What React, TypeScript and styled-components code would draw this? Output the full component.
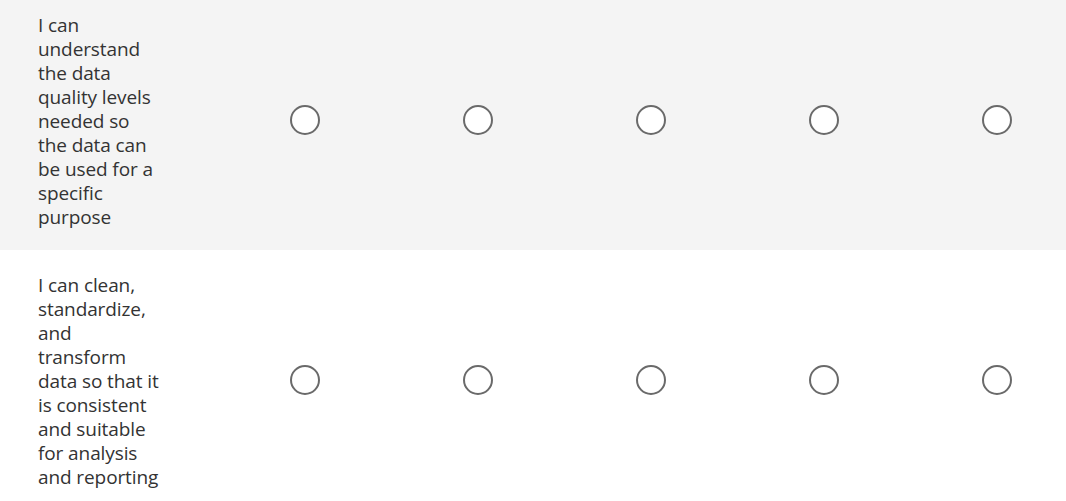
import React from "react";
import styled, { createGlobalStyle } from "styled-components";

const GlobalStyle = createGlobalStyle`
  html, body {
    margin: 0;
    padding: 0;
    overflow: hidden;
    background: #ffffff;
  }
  body {
    font-family: "Open Sans", "Noto Sans", sans-serif;
  }
`;

const Table = styled.div`
  display: flex;
  flex-direction: column;
  margin-top: -10px;
  width: 1083px;
`;

const Row = styled.div<{ $shaded?: boolean }>`
  display: grid;
  grid-template-columns: 218px repeat(5, 173px);
  align-items: center;
  height: 260px;
  background: ${(p) => (p.$shaded ? "#f4f4f4" : "#ffffff")};
`;

const Label = styled.div`
  padding: 1px 0 0 38px;
  font-size: 19px;
  line-height: 24px;
  letter-spacing: -0.1px;
  color: #333333;
`;

const Line = styled.span`
  display: block;
  white-space: nowrap;
`;

const Cell = styled.div`
  display: flex;
  justify-content: center;
  align-items: center;
`;

const Radio = styled.span`
  display: block;
  box-sizing: border-box;
  width: 30px;
  height: 30px;
  border-radius: 50%;
  border: 2px solid #6a6a6a;
  background: #ffffff;
`;

const rows = [
  [
    "I can",
    "understand",
    "the data",
    "quality levels",
    "needed so",
    "the data can",
    "be used for a",
    "specific",
    "purpose",
  ],
  [
    "I can clean,",
    "standardize,",
    "and",
    "transform",
    "data so that it",
    "is consistent",
    "and suitable",
    "for analysis",
    "and reporting",
  ],
];

export default function App() {
  return (
    <>
      <GlobalStyle />
      <Table>
        {rows.map((lines, i) => (
          <Row key={i} $shaded={i === 0}>
            <Label>
              {lines.map((l, j) => (
                <Line key={j}>{l}</Line>
              ))}
            </Label>
            {[0, 1, 2, 3, 4].map((c) => (
              <Cell key={c}>
                <Radio role="radio" aria-checked="false" />
              </Cell>
            ))}
          </Row>
        ))}
      </Table>
    </>
  );
}
